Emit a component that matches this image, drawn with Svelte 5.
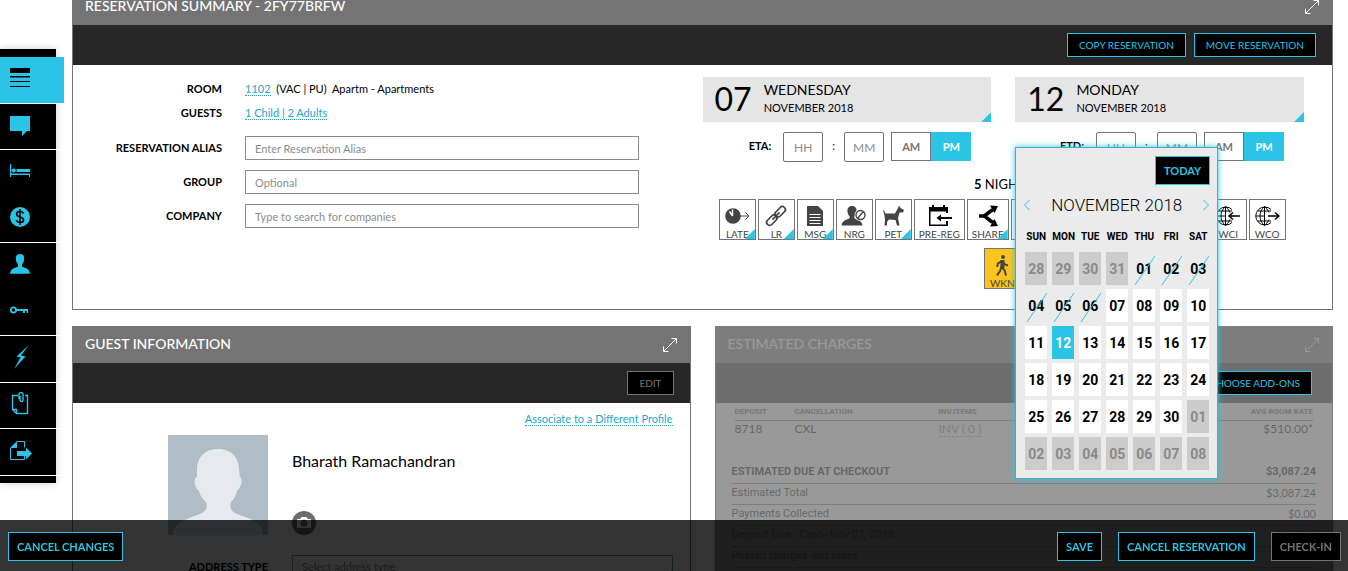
<script>
  const menu = [
    { id: 'list', label: 'Summary', active: true, line: true },
    { id: 'comment', label: 'Comments', line: true },
    { id: 'bed', label: 'Room' },
    { id: 'dollar', label: 'Rates', line: true },
    { id: 'person', label: 'Guest' },
    { id: 'key', label: 'Keys', line: true },
    { id: 'bolt', label: 'Actions', line: true },
    { id: 'note', label: 'Attachments', line: true },
    { id: 'export', label: 'Export', line: true }
  ];

  const fields = [
    { id: 'alias', label: 'RESERVATION ALIAS', hint: 'Enter Reservation Alias' },
    { id: 'group', label: 'GROUP', hint: 'Optional' },
    { id: 'company', label: 'COMPANY', hint: 'Type to search for companies' }
  ];

  const stays = [
    { id: 'eta', label: 'ETA:', num: '07', day: 'WEDNESDAY', month: 'NOVEMBER 2018' },
    { id: 'etd', label: 'ETD:', num: '12', day: 'MONDAY', month: 'NOVEMBER 2018' }
  ];

  const tiles = [
    { id: 'late', label: 'LATE', corner: true },
    { id: 'link', label: 'LR', corner: true },
    { id: 'msg', label: 'MSG', corner: true },
    { id: 'nrg', label: 'NRG' },
    { id: 'pet', label: 'PET', corner: true },
    { id: 'prereg', label: 'PRE-REG' },
    { id: 'share', label: 'SHARE', corner: true },
    { id: 'b1' }, { id: 'b2' }, { id: 'wide' }, { id: 'b4' }, { id: 'b5' },
    { id: 'wci', label: 'WCI' },
    { id: 'wco', label: 'WCO' },
    { id: 'walk', label: 'WKN', gold: true }
  ];

  const weekdays = ['SUN', 'MON', 'TUE', 'WED', 'THU', 'FRI', 'SAT'];
  // The grid starts on 28 October and covers six weeks.
  const weeks = Array.from({ length: 6 }, (_, w) =>
    Array.from({ length: 7 }, (_, d) => {
      const n = w * 7 + d - 3;
      const kind = n < 1 || n > 30 ? 'out' : n < 7 ? 'past' : n === 12 ? 'picked' : 'open';
      const day = n < 1 ? n + 31 : n > 30 ? n - 30 : n;
      return { day: String(day).padStart(2, '0'), kind };
    })
  );

  const charges = [
    { label: 'ESTIMATED DUE AT CHECKOUT', value: '$3,087.24', strong: true },
    { label: 'Estimated Total', value: '$3,087.24' },
    { label: 'Payments Collected', value: '$0.00' },
    { label: 'Deposit Due - Cash- Nov 07, 2018', value: '$510.00' },
    { label: 'Posted charges and taxes', value: '' }
  ];
</script>

{#snippet expand()}
  <button class="expand" aria-label="Expand">
    <svg width="16" height="16" viewBox="0 0 16 16" fill="none" stroke="currentColor">
      <path d="M2 14 14 2M9.500 1.500h5v5M1.500 9.500v5h5" />
    </svg>
  </button>
{/snippet}

{#snippet menuIcon(id)}
  <svg width="24" height="24" viewBox="0 0 24 24" fill="currentColor" aria-hidden="true">
    {#if id === 'list'}
      <path d="M2 2h20v5H2zM2 10h20v1H2zM2 15h20v1H2zM2 20h20v1H2z" /><path d="M2 11h20v.5H2z" />
    {:else if id === 'comment'}
      <path d="M2 4h20v15h-3l-5 5v-5H2z" />
    {:else if id === 'bed'}
      <path d="M2 5h1.300v9.500H22V18h-1v-2H3.300v2H2zM8.500 10H22v3H8.500z" /><circle cx="5.800" cy="11.500" r="2" />
    {:else if id === 'dollar'}
      <circle cx="12" cy="12" r="10" />
      <path d="M15.500 8.500C15 7 13.700 6.500 12 6.500c-2 0-3.400.9-3.400 2.600 0 3.800 7 1.900 7 5.700 0 1.700-1.500 2.700-3.600 2.700-1.900 0-3.300-.8-3.700-2.400M12 4v16" fill="none" stroke="#000" stroke-width="1.600" />
    {:else if id === 'person'}
      <path d="M12 2c3 0 4.400 2 4.200 4.800-.1 2.400-1 4.300-2.200 5.400v2.300c2.200 1.500 7.600 1.500 8 7.300H2c.4-5.800 5.800-5.800 8-7.300v-2.300c-1.200-1.100-2.100-3-2.200-5.400C7.600 4 9 2 12 2z" />
    {:else if id === 'key'}
      <circle cx="5.500" cy="11" r="2.600" fill="none" stroke="currentColor" stroke-width="1.800" />
      <path d="M8 10h12v4h-1.500v-2H17v2h-2v-2H8z" />
    {:else if id === 'bolt'}
      <path d="m21 0-12.500 11.500 4 1L6 24l11.500-12.500-4.500-1z" />
    {:else if id === 'note'}
      <path d="M10 3.500H4.500v14l4 4H19.500v-18H17M4.500 17.500h4v4M11 7V2.500a2 2 0 0 1 4 0V8a1.500 1.500 0 0 1-3 0V4" fill="none" stroke="currentColor" stroke-width="1.400" />
    {:else}
      <path d="M9 3.500h7.500v6M16.500 17v4.500h-14V10" fill="none" stroke="currentColor" />
      <path d="M2 10l7-7v7zM9 13h9V9.500l6 6-6 6V18H9z" />
    {/if}
  </svg>
{/snippet}

{#snippet tileIcon(id)}
  <svg width="26" height="24" viewBox="0 0 26 24" fill="currentColor" aria-hidden="true">
    {#if id === 'late'}
      <circle cx="9" cy="12" r="7.800" />
      <path d="M8.500 12V5.500M8.500 12 5.500 7.500" stroke="#fff" stroke-width="1.400" />
      <path d="M16 12h9M21.500 8.500 25 12l-3.500 3.500" fill="none" stroke="currentColor" />
    {:else if id === 'link'}
      <g fill="none" stroke="currentColor" stroke-width="1.700" transform="rotate(-45 13 12)">
        <rect x="1" y="9" width="12" height="6" rx="3" /><rect x="13" y="9" width="12" height="6" rx="3" /><path d="M8 12h10" />
      </g>
    {:else if id === 'msg'}
      <path d="M5 2h11l5 5v15H5z" />
      <path d="M7.500 10.500h11M7.500 13.500h11M7.500 16.500h11M7.500 19.500h11" stroke="#fff" />
    {:else if id === 'nrg'}
      <path d="M11 2c3.300 0 4.800 2 4.600 5-.1 2.200-.9 4-2.200 5.200v2c2.200 1.700 7.500 1.500 8.100 7.300H.5c.6-5.800 5.900-5.600 8.100-7.300v-2C7.300 11 6.500 9.200 6.400 7 6.200 4 7.700 2 11 2z" />
      <circle cx="19.500" cy="11" r="6" fill="#fff" />
      <path d="m16.500 14.500 6-7M24 11a4.500 4.500 0 1 1-9 0 4.500 4.500 0 0 1 9 0z" fill="none" stroke="currentColor" stroke-width="1.400" />
    {:else if id === 'pet'}
      <path d="M3 6c1 0 1.500 1.500 2.500 3.500H15L18 4l1-2.500L20.500 4 24 6l-1 2.500h-3.500L18 14l1.500 7.500H17L15.500 16 9 15.500 7 18v3.500H4.500L5 16 4.500 11.500z" />
    {:else if id === 'prereg'}
      <path d="M3 3h3V1h2v2h9V1h2v2h3v6h-2V7.500H4.500v13H20V17h2v5H3z" /><path d="M10.500 14 15 10.500V13h11v2H15v2.500z" />
    {:else if id === 'share'}
      <path d="M4 12h4c4 0 6-6 12-7M4 12h4c4 0 6 6 12 7" fill="none" stroke="currentColor" stroke-width="3.600" />
      <path d="m15 1.500 8 .5-3.500 7zM15 22.500l8-.5-3.500-7z" />
    {:else if id === 'wci' || id === 'wco'}
      <g fill="none" stroke="currentColor" stroke-width="1">
        <path d="M17 18.500a9 9 0 1 1 0-13M10.500 2.500v19M2 12h9M4 7h13M4 17h13M10.500 2.500c-6 5-6 14 0 19M10.500 2.500c3 2.500 4 5 4.400 6M10.500 21.500c3-2.500 4-5 4.400-6" />
        {#if id === 'wci'}
          <path d="M14 12h11M18 8.500 14 12l4 3.500" stroke-width="1.500" />
        {:else}
          <path d="M14 12h11M21 8.500 25 12l-4 3.500" stroke-width="1.500" />
        {/if}
      </g>
    {:else if id === 'walk'}
      <circle cx="14" cy="4" r="2" />
      <path d="M13.500 7.500 12.500 14l-1.500 4-3 4.500M12.500 14l3 3 1.500 5.500M13 8l-4 2.500-.8 3.500M13.500 8.500l2.500 3 3 1" fill="none" stroke="currentColor" stroke-width="2" />
      <path d="M11.500 7h4v8h-4z" />
    {/if}
  </svg>
{/snippet}

<div class="shell">
  <nav class="menu">
    {#each menu as m}
      <button class:active={m.active} class:line={m.line} aria-label={m.label}>{@render menuIcon(m.id)}</button>
    {/each}
  </nav>

  <main>
    <section class="panel">
      <header><h2>RESERVATION SUMMARY - 2FY77BRFW</h2>{@render expand()}</header>
      <div class="tools">
        <button class="btn">COPY RESERVATION</button>
        <button class="btn">MOVE RESERVATION</button>
      </div>
      <div class="summary">
        <div class="form">
          <div class="row"><span class="name">ROOM</span><p><a href="#room">1102</a>&nbsp; (VAC | PU)&nbsp; Apartm - Apartments</p></div>
          <div class="row"><span class="name">GUESTS</span><p><a href="#guests">1 Child | 2 Adults</a></p></div>
          <div class="inputs">
            {#each fields as f}
              <div class="row"><label class="name" for={f.id}>{f.label}</label><input id={f.id} placeholder={f.hint} /></div>
            {/each}
          </div>
        </div>

        <div class="stay">
          <div class="dates">
            {#each stays as s}
              <div class="date">
                <button class="card">
                  <span class="num">{s.num}</span>
                  <span class="words"><span class="day">{s.day}</span><span>{s.month}</span></span>
                  <i class="corner"></i>
                </button>
                <div class="time">
                  <label for={s.id}>{s.label}</label>
                  <input id={s.id} placeholder="HH" />
                  <span class="colon">:</span>
                  <input placeholder="MM" aria-label="Minutes" />
                  <div class="half"><button>AM</button><button class="on">PM</button></div>
                </div>
                {#if s.id === 'etd'}
                  <div class="calendar">
                    <button class="btn bold today">TODAY</button>
                    <div class="month">
                      <button aria-label="Previous month"><svg width="8" height="12" viewBox="0 0 8 12" fill="none" stroke="currentColor"><path d="M6.500 1 1.500 6l5 5" /></svg></button>
                      <h3>NOVEMBER 2018</h3>
                      <button aria-label="Next month"><svg width="8" height="12" viewBox="0 0 8 12" fill="none" stroke="currentColor"><path d="m1.500 1 5 5-5 5" /></svg></button>
                    </div>
                    <table>
                      <thead><tr>{#each weekdays as w}<th>{w}</th>{/each}</tr></thead>
                      <tbody>
                        {#each weeks as week}
                          <tr>
                            {#each week as c}
                              <td><button class={c.kind} disabled={c.kind === 'past' || c.kind === 'out'}>{c.day}{#if c.kind === 'past'}<svg class="slash" width="22" height="33" viewBox="0 0 22 33" aria-hidden="true"><path d="M2 33 22 4" stroke="#2bc3e6" /></svg>{/if}</button></td>
                            {/each}
                          </tr>
                        {/each}
                      </tbody>
                    </table>
                  </div>
                {/if}
              </div>
            {/each}
          </div>
          <p class="nights"><b>5</b> NIGHTS</p>
          <div class="tiles">
            {#each tiles as t}
              <button class="tile {t.id}" class:gold={t.gold}>
                {@render tileIcon(t.id)}
                <span>{t.label ?? ''}</span>
                {#if t.corner}<i class="corner"></i>{/if}
              </button>
            {/each}
          </div>
        </div>
      </div>
    </section>

    <div class="pair">
      <section class="panel">
        <header><h2>GUEST INFORMATION</h2>{@render expand()}</header>
        <div class="tools"><button class="btn off">EDIT</button></div>
        <div class="guest">
          <p class="associate"><a href="#profile">Associate to a Different Profile</a></p>
          <div class="who">
            <svg class="avatar" width="100" height="100" viewBox="0 0 100 100" role="img" aria-label="Guest">
              <path fill="#b1bdc6" d="M0 0h100v100H0z" />
              <path fill="#e6eaee" d="M50 14c14 0 21 9 21 21l1 7c3 1 2 10-3 14-1 5-3 8-6 11-2 6 0 9 6 12 14 5 26 8 26 21H5C6 87 19 84 32 79c6-3 8-6 6-12-3-3-6-6-7-11-5-4-6-13-2-14V35c0-12 7-21 21-21z" />
            </svg>
            <div class="person">
              <p>Bharath Ramachandran</p>
              <button class="camera" aria-label="Take photo">
                <svg width="16" height="14" viewBox="0 0 16 14" fill="#fff"><path d="M1 3h3l1.500-2h5L12 3h3v9H1z" /><circle cx="8" cy="7.300" r="3.500" fill="#6c6c6c" /></svg>
              </button>
            </div>
          </div>
          <div class="address">
            <label class="name" for="address">ADDRESS TYPE</label>
            <div class="pick"><select id="address"><option>Select address type</option></select><i class="corner"></i></div>
          </div>
        </div>
      </section>

      <section class="panel dimmed">
        <header><h2>ESTIMATED CHARGES</h2>{@render expand()}</header>
        <div class="tools"><button class="btn addons">CHOOSE ADD-ONS</button></div>
        <div class="charges">
          <table class="rates">
            <thead><tr><th class="c1">DEPOSIT</th><th class="c2">CANCELLATION</th><th>INV.ITEMS</th><th class="end">AVG ROOM RATE</th></tr></thead>
            <tbody><tr><td>8718</td><td>CXL</td><td><a href="#items">INV ( 0 )</a></td><td class="end">$510.00*</td></tr></tbody>
          </table>
          <table class="totals">
            <tbody>
              {#each charges as c}
                <tr class:strong={c.strong}><th>{c.label}</th><td>{c.value}</td></tr>
              {/each}
            </tbody>
          </table>
        </div>
      </section>
    </div>
  </main>

  <footer>
    <button class="btn bold first">CANCEL CHANGES</button>
    <button class="btn bold">SAVE</button>
    <button class="btn bold">CANCEL RESERVATION</button>
    <button class="btn bold off">CHECK-IN</button>
  </footer>
</div>

<style>
  :global(body) { margin: 0; background: #fff; }
  .shell, .shell * { box-sizing: border-box; }
  .shell {
    --cyan: #2bc3e6;
    --grey: #747474;
    display: flex;
    align-items: flex-start;
    height: 100vh;
    overflow: hidden;
    font: 11px/16px Lato, sans-serif;
    color: #000;
  }
  p, h2, h3 { margin: 0; }
  button, input, select { font: inherit; color: inherit; margin: 0; padding: 0; border: 0; background: none; border-radius: 0; }
  svg { display: block; flex: none; }
  a { color: #1ea5cc; text-decoration: none; border-bottom: 1px dotted; }

  .menu {
    display: grid;
    grid-template-rows: repeat(9, 1fr);
    flex: none;
    width: 56px;
    height: 434px;
    margin: 49px 16px 0 0;
    padding: 8px 0 7px;
    background: #000;
    box-shadow: 0 0 8px rgba(0, 0, 0, .2);
  }
  .menu button { display: flex; align-items: center; padding: 0 8px 4px; color: var(--cyan); }
  .menu .line { border-bottom: 1px solid #fff; }
  .menu .active { width: 64px; background: var(--cyan); background-clip: padding-box; color: #000; }

  /* The page rests slightly scrolled, under the top edge. */
  main { flex: 1; min-width: 0; margin: -12px 15px 0 0; }
  .panel { position: relative; border: 1px solid var(--grey); border-top: 0; background: #fff; }
  header { display: flex; align-items: center; justify-content: space-between; height: 37px; padding: 0 12px; background: var(--grey); color: #fff; }
  h2 { font-size: 14px; line-height: 20px; font-weight: 500; padding-bottom: 2px; }
  .tools { display: flex; justify-content: flex-end; align-items: center; gap: 8px; height: 40px; padding: 0 16px; background: #262626; }
  .btn { height: 24px; padding: 0 11px; border: 1px solid var(--cyan); background: #000; color: var(--cyan); font-size: 10px; white-space: nowrap; }
  .btn.bold { height: 29px; padding: 0 8px; font-size: 11px; font-weight: 700; }
  .btn.off { border-color: var(--grey); color: var(--grey); }

  .summary { display: grid; grid-template-columns: 1fr 1fr; padding: 12px 0 20px; }
  .form { padding-right: 64px; }
  .row { display: grid; grid-template-columns: 149px 1fr; column-gap: 23px; align-items: center; min-height: 24px; }
  .name { font-size: 11px; font-weight: 700; text-align: right; }
  .inputs { display: grid; gap: 10px; margin-top: 11px; }
  .inputs input { width: 100%; height: 24px; padding: 0 9px; border: 1px solid #8c8c8c; }
  ::placeholder { color: #8c8c8c; opacity: 1; }

  .stay { padding-right: 28px; }
  .dates { display: grid; grid-template-columns: 1fr 1fr; gap: 24px; }
  .date { position: relative; }
  .card { position: relative; display: flex; align-items: center; gap: 12px; width: 100%; height: 45px; padding: 0 12px 2px; background: #e5e5e5; text-align: left; }
  .num { font-size: 32px; line-height: 40px; }
  .words { display: grid; font-size: 11px; line-height: 18px; }
  .day { font-size: 14px; }
  .corner { position: absolute; right: 0; bottom: 0; width: 10px; height: 10px; background: var(--cyan); clip-path: polygon(100% 0, 100% 100%, 0 100%); }
  .time { display: flex; justify-content: flex-end; height: 30px; margin-top: 10px; padding-right: 20px; }
  .time label { padding: 6px 12px 0 0; font-size: 11px; font-weight: 700; }
  .time input { width: 40px; height: 30px; border: 1px solid var(--grey); border-radius: 2px; font-size: 12px; text-align: center; }
  .colon { width: 21px; padding-top: 6px; text-align: center; }
  .half { display: flex; height: 29px; margin-left: 7px; font-size: 11px; font-weight: 700; color: var(--grey); }
  .half button { width: 40px; border: 1px solid var(--grey); }
  .half .on { border-color: var(--cyan); background: var(--cyan); color: #fff; }
  .nights { margin-top: 12px; font-size: 13px; line-height: 20px; text-align: center; }
  .tiles { display: flex; flex-wrap: wrap; justify-content: center; gap: 8px 2px; margin: 5px 14px 0 12px; }
  .tile { position: relative; display: flex; flex-direction: column; align-items: center; min-width: 37px; height: 41px; padding: 4px 4px 0; border: 1px solid var(--grey); color: #444; font-size: 10px; line-height: 12px; }
  .wide { min-width: 41px; }
  .prereg, .share, .wci, .wco { color: #000; }
  .tile span { color: #444; }
  .gold { background: #fec31d; }

  .calendar {
    position: absolute;
    z-index: 5;
    left: 0;
    top: 70px;
    width: 203px;
    padding: 8px 3px 4px 4px;
    border: 1px solid #48a9c2;
    background: #ebebeb;
    box-shadow: 0 0 6px var(--cyan);
    font-family: Roboto, sans-serif;
  }
  .btn.today { display: block; margin: 0 4px 0 auto; font-family: Lato, sans-serif; }
  .month { display: flex; align-items: center; justify-content: space-between; margin: 8px 4px 0 3px; color: var(--cyan); }
  h3 { font-size: 17px; line-height: 24px; font-weight: 300; color: #000; }
  .calendar table { border-spacing: 5px 4px; margin-top: 8px; table-layout: fixed; }
  .calendar th { width: 22px; max-width: 22px; padding: 0 0 3px; font-size: 10px; line-height: 16px; font-weight: 700; white-space: nowrap; }
  .calendar td { padding: 0; width: 22px; }
  .calendar td button { position: relative; display: block; width: 22px; height: 33px; font-size: 14px; font-weight: 700; background: #fff; color: #000; }
  .calendar td .out { background: #ccc; color: #8a8a8a; }
  .calendar td .past { background: none; }
  .calendar td .picked { background: var(--cyan); color: #fff; }
  .slash { position: absolute; left: 0; top: 0; }

  .pair { display: grid; grid-template-columns: 1fr 1fr; gap: 24px; margin-top: 16px; }
  .guest { padding: 8px 17px 40px 95px; }
  .associate { text-align: right; }
  .who { display: flex; gap: 24px; margin-top: 8px; }
  .person { display: flex; flex-direction: column; justify-content: space-between; padding-top: 14px; font-size: 16px; line-height: 24px; }
  .camera { display: grid; place-items: center; width: 24px; height: 24px; border-radius: 50%; background: #6c6c6c; }
  .address { display: grid; grid-template-columns: 100px 1fr; gap: 24px; align-items: center; margin-top: 20px; }
  .pick { position: relative; }
  select { width: 100%; height: 24px; padding: 0 9px; border: 1px solid #8c8c8c; color: #8c8c8c; appearance: none; }

  .dimmed::after { content: ''; position: absolute; inset: 0 -1px -1px; background: rgba(128, 128, 128, .8); }
  .addons { position: relative; z-index: 1; margin-right: 4px; }
  .charges { font: 11px/16px Roboto, sans-serif; color: #000; }
  .charges table { border-collapse: collapse; }
  .charges th { padding: 0; text-align: left; font-weight: 400; }
  .charges td { padding: 0; font-family: Lato, sans-serif; }
  .rates { width: calc(100% - 38px); margin: 2px 18px 0 19px; }
  .rates th { height: 15px; border-bottom: 1px solid #777; font-size: 8px; line-height: 14px; font-weight: 700; color: #555; }
  .rates td { height: 16px; font-size: 12px; }
  .rates a { color: #777; }
  .c1 { width: 60px; }
  .c2 { width: 144px; }
  .charges .end, .totals td { text-align: right; }
  .totals { width: calc(100% - 32px); margin: 22px 16px 40px; }
  .totals tr { height: 21px; border-bottom: 1px solid #777; }
  .totals th, .totals td { padding-bottom: 3px; }
  .totals .strong, .totals .strong th, .totals .strong td { height: 25px; padding: 3px 0 0; font-weight: 700; font-family: Roboto, sans-serif; }

  footer { position: fixed; z-index: 4; inset: auto 0 0; display: flex; gap: 16px; height: 51px; padding: 12px 7px 10px 8px; background: rgba(0, 0, 0, .8); }
  .first { margin-right: auto; }
</style>
